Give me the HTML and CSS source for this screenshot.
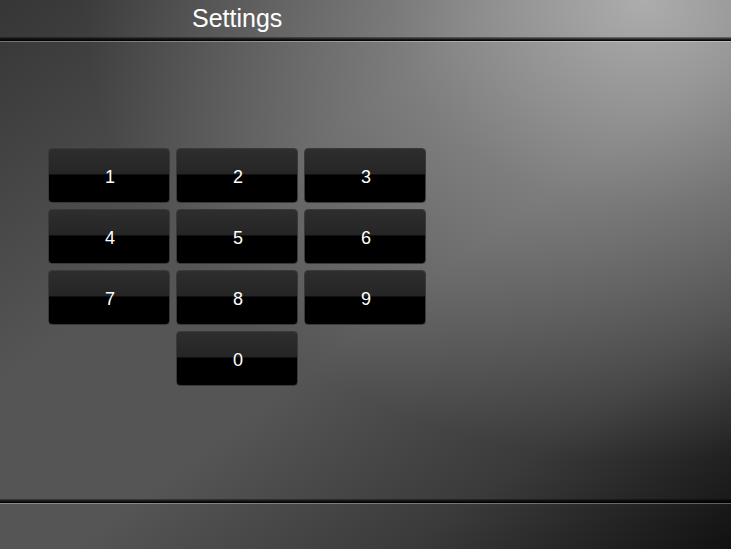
FILE: index.html
```html
<!DOCTYPE html>
<html>
<head>
<meta charset="utf-8">
<title>Settings</title>
<link rel="stylesheet" href="styles.css">
</head>
<body>
<div class="screen">
  <header class="header">
    <h1 class="title">Settings</h1>
  </header>
  <div class="separator"></div>
  <main class="main">
    <div class="keypad">
      <button class="key">1</button>
      <button class="key">2</button>
      <button class="key">3</button>
      <button class="key">4</button>
      <button class="key">5</button>
      <button class="key">6</button>
      <button class="key">7</button>
      <button class="key">8</button>
      <button class="key">9</button>
      <button class="key key-zero">0</button>
    </div>
  </main>
  <div class="separator"></div>
  <footer class="footer"></footer>
</div>
</body>
</html>
```

FILE: styles.css
```css
html, body {
  margin: 0;
  padding: 0;
  width: 731px;
  height: 549px;
  overflow: hidden;
}

body {
  font-family: "Liberation Sans", Arial, sans-serif;
  background-color: #4a4a4a;
  background-image:
    radial-gradient(ellipse 560px 460px at 88% 0%, rgba(210,210,210,0.7) 0%, rgba(200,200,200,0.35) 45%, rgba(200,200,200,0) 100%),
    linear-gradient(to bottom right, #363636 0%, #555555 35%, #555555 55%, #3a3a3a 78%, #111111 100%);
}

.screen {
  display: flex;
  flex-direction: column;
  height: 549px;
}

.header {
  height: 37px;
  flex: none;
  display: flex;
  align-items: center;
}

.title {
  margin: 0;
  padding-left: 192px;
  font-size: 25px;
  font-weight: normal;
  color: #ffffff;
  line-height: 37px;
}

.separator {
  flex: none;
  height: 5px;
  background: linear-gradient(to bottom, rgba(0,0,0,0.25) 0%, rgba(0,0,0,0.75) 40%, #000000 78%, rgba(255,255,255,0.3) 80%, rgba(255,255,255,0.3) 100%);
}

.main {
  flex: 1;
  padding: 106px 0 0 48px;
}

.keypad {
  display: grid;
  grid-template-columns: repeat(3, 122px);
  grid-auto-rows: 55px;
  column-gap: 6px;
  row-gap: 6px;
}

.key {
  box-sizing: border-box;
  margin: 0;
  padding: 4px 0 0 2px;
  border: 1px solid #3a3a3a;
  border-radius: 4px;
  background: linear-gradient(to bottom, #2e2e2e 0%, #252525 47%, #000000 49%, #000000 100%);
  color: #ffffff;
  font-family: "Liberation Sans", Arial, sans-serif;
  font-size: 18px;
  cursor: pointer;
}

.key-zero {
  grid-column: 2;
}

.footer {
  flex: none;
  height: 45px;
}
```
